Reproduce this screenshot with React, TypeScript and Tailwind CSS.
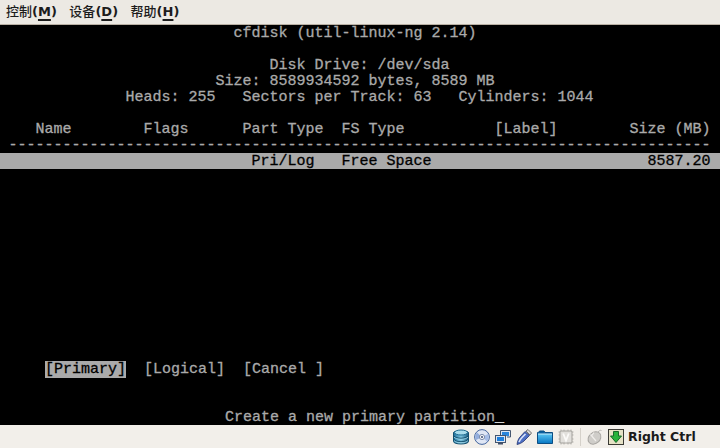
const dash = "-".repeat(78);

function MenuItem({ label, hot }: { label: string; hot: string }) {
  return (
    <span className="whitespace-pre">
      <span className="font-['Noto_Sans_CJK_SC',sans-serif] font-medium">{label}</span>(
      <span className="underline decoration-2 underline-offset-[3px]">{hot}</span>)
    </span>
  );
}

function Row({ text = "", className = "" }: { text?: string; className?: string }) {
  return <div className={`h-4 whitespace-pre indent-[-0.5px] leading-[18px] ${className}`}>{text}</div>;
}

function DiskIcon() {
  return (
    <svg width="16" height="16" viewBox="0 0 16 16">
      <defs>
        <linearGradient id="dk" x1="0" x2="1" y1="0" y2="0">
          <stop offset="0" stopColor="#1d6f9c" />
          <stop offset="0.5" stopColor="#7cc3de" />
          <stop offset="1" stopColor="#17587e" />
        </linearGradient>
      </defs>
      <path d="M0.5 3.5C0.5 1.5 15.5 1.5 15.5 3.5V12.5C15.5 15.8 0.5 15.8 0.5 12.5Z" fill="url(#dk)" stroke="#14506f" />
      <ellipse cx="8" cy="3.5" rx="6.5" ry="2.5" fill="#a9dcec" stroke="#1f6d92" />
      <path d="M1 7C3 10 13 10 15 7M1 10.5C3 13.5 13 13.5 15 10.5" fill="none" stroke="#0f4a68" />
      <path d="M1 8C3 11 13 11 15 8M1 11.5C3 14.5 13 14.5 15 11.5" fill="none" stroke="#a5dcee" strokeWidth="0.8" />
    </svg>
  );
}

function CdIcon() {
  return (
    <svg width="16" height="16" viewBox="0 0 16 16">
      <circle cx="8" cy="8" r="7.4" fill="#dfe6f4" stroke="#43659e" />
      <path d="M8 8L3 3.5A7 7 0 0 0 2 11Z" fill="#94aedd" />
      <path d="M8 8L13 12.5A7 7 0 0 0 14 5Z" fill="#a6bde6" />
      <circle cx="8" cy="8" r="2.6" fill="#f8f8f8" stroke="#7b8cab" />
      <circle cx="8" cy="8" r="1" fill="#3c4e74" />
    </svg>
  );
}

function NetworkIcon() {
  return (
    <svg width="16" height="16" viewBox="0 0 16 16">
      <path d="M5.5 8V1.5H15.5V8H12" fill="#dfe7f2" stroke="#44566f" />
      <rect x="7" y="3" width="7" height="4" fill="#2a86dc" />
      <rect x="0.5" y="6.5" width="10" height="7" fill="#dfe7f2" stroke="#44566f" />
      <rect x="2" y="8" width="7" height="4" fill="#1e7fdd" />
      <rect x="3" y="13.5" width="5" height="2" fill="#3f4f68" />
    </svg>
  );
}

function UsbIcon() {
  return (
    <svg width="16" height="16" viewBox="0 0 16 16">
      <path d="M1 15.5C1.5 12 2.5 9.5 4 8L9 2.5L13.5 6.5L8 12C6 13.8 3.5 15 1 15.5Z" fill="#4d6fc4" stroke="#26366f" strokeWidth="0.8" />
      <path d="M3 13C4 11 5 9.5 6.5 8L9.5 5" fill="none" stroke="#dbe4f8" strokeWidth="1.6" />
      <path d="M10 2L12 0.5L15.5 4L14 6Z" fill="#dcdcdc" stroke="#555" strokeWidth="0.8" />
    </svg>
  );
}

function FolderIcon() {
  return (
    <svg width="16" height="16" viewBox="0 0 16 16">
      <defs>
        <linearGradient id="fd" x1="0" x2="0" y1="0" y2="1">
          <stop offset="0" stopColor="#58c4f2" />
          <stop offset="1" stopColor="#0b79c4" />
        </linearGradient>
      </defs>
      <path d="M0.5 14.5V3.5H1.5L2.5 2H7L8 3.5H15.5V14.5Z" fill="#0a5f9f" stroke="#0b4e84" />
      <rect x="1" y="5" width="14" height="9" fill="url(#fd)" />
      <path d="M1 5H15" stroke="#c8eefc" />
    </svg>
  );
}

function ChipIcon() {
  return (
    <svg width="16" height="16" viewBox="0 0 16 16">
      <path d="M3 0.5V15.5M6 0.5V15.5M10 0.5V15.5M13 0.5V15.5M0.5 3H15.5M0.5 6H15.5M0.5 10H15.5M0.5 13H15.5" stroke="#b5b3ae" />
      <rect x="2" y="2" width="12" height="12" rx="1" fill="#e2e0dc" stroke="#a3a19c" />
      <path d="M5.2 4.5L8 11.5L10.8 4.5" fill="none" stroke="#fbfaf8" strokeWidth="1.8" />
    </svg>
  );
}

function MouseIcon() {
  return (
    <svg width="16" height="16" viewBox="0 0 16 16">
      <path d="M14.5 1.5C13.5 0.8 12 1.8 11 3" fill="none" stroke="#b9b7b3" />
      <ellipse cx="7.5" cy="9" rx="7" ry="5.5" transform="rotate(-40 7.5 9)" fill="#cfcdc9" stroke="#a8a6a2" />
      <path d="M3.5 5.5L9 12M7 3.5L4.5 7" fill="none" stroke="#efedea" strokeWidth="1.2" />
    </svg>
  );
}

function CaptureIcon() {
  return (
    <svg width="16" height="16" viewBox="0 0 16 16">
      <rect x="0.5" y="0.5" width="15" height="15" fill="#e6e2c6" stroke="#3a3a34" />
      <path d="M5.5 2.5H10.5V7H13.5L8 13.5L2.5 7H5.5Z" fill="#27b33c" stroke="#17692a" />
    </svg>
  );
}

export default function App() {
  return (
    <div className="flex h-[448px] w-[720px] flex-col overflow-hidden bg-black">
      <div className="flex h-[25px] shrink-0 items-center gap-[12.5px] border-b border-[#b9b0a4] bg-[#ece9e3] pl-[6px] pb-[2px] font-['DejaVu_Sans',sans-serif] text-[13px] font-bold text-[#1c1c1c]">
        <MenuItem label="控制" hot="M" />
        <MenuItem label="设备" hot="D" />
        <MenuItem label="帮助" hot="H" />
      </div>

      <div className="h-[400px] shrink-0 font-['Liberation_Mono',monospace] text-[15px] text-[#aaaaaa] [-webkit-text-stroke:0.3px]">
        <Row text="                          cfdisk (util-linux-ng 2.14)" />
        <Row />
        <Row text="                              Disk Drive: /dev/sda" />
        <Row text="                        Size: 8589934592 bytes, 8589 MB" />
        <Row text="              Heads: 255   Sectors per Track: 63   Cylinders: 1044" />
        <Row />
        <Row text="    Name        Flags      Part Type  FS Type          [Label]        Size (MB)" />
        <Row text={" " + dash} />
        <Row
          className="bg-[#aaaaaa] text-black"
          text="                            Pri/Log   Free Space                        8587.20"
        />
        {Array.from({ length: 12 }, (_, i) => (
          <Row key={i} />
        ))}
        <div className="h-4 whitespace-pre leading-[18px]">
          {"     "}
          <span className="bg-[#aaaaaa] text-black">[Primary]</span>
          {"  [Logical]  [Cancel ]"}
        </div>
        <Row />
        <Row />
        <div className="h-4 whitespace-pre leading-[18px]">
          {"                         Create a new primary partition"}
          <span className="text-white">_</span>
        </div>
      </div>

      <div className="flex h-[23px] shrink-0 items-center bg-[#f2efea] pl-[453px] pt-px">
        <div className="flex items-center gap-[5px]">
          <DiskIcon />
          <CdIcon />
          <NetworkIcon />
          <UsbIcon />
          <FolderIcon />
          <ChipIcon />
        </div>
        <div className="mx-[6px] h-[18px] w-px bg-[#d5d1ca]" />
        <div className="flex items-center gap-[5px]">
          <MouseIcon />
          <CaptureIcon />
        </div>
        <span className="ml-[4px] font-['DejaVu_Sans',sans-serif] text-[12.5px] font-bold text-[#1a1a1a]">Right Ctrl</span>
      </div>
    </div>
  );
}
